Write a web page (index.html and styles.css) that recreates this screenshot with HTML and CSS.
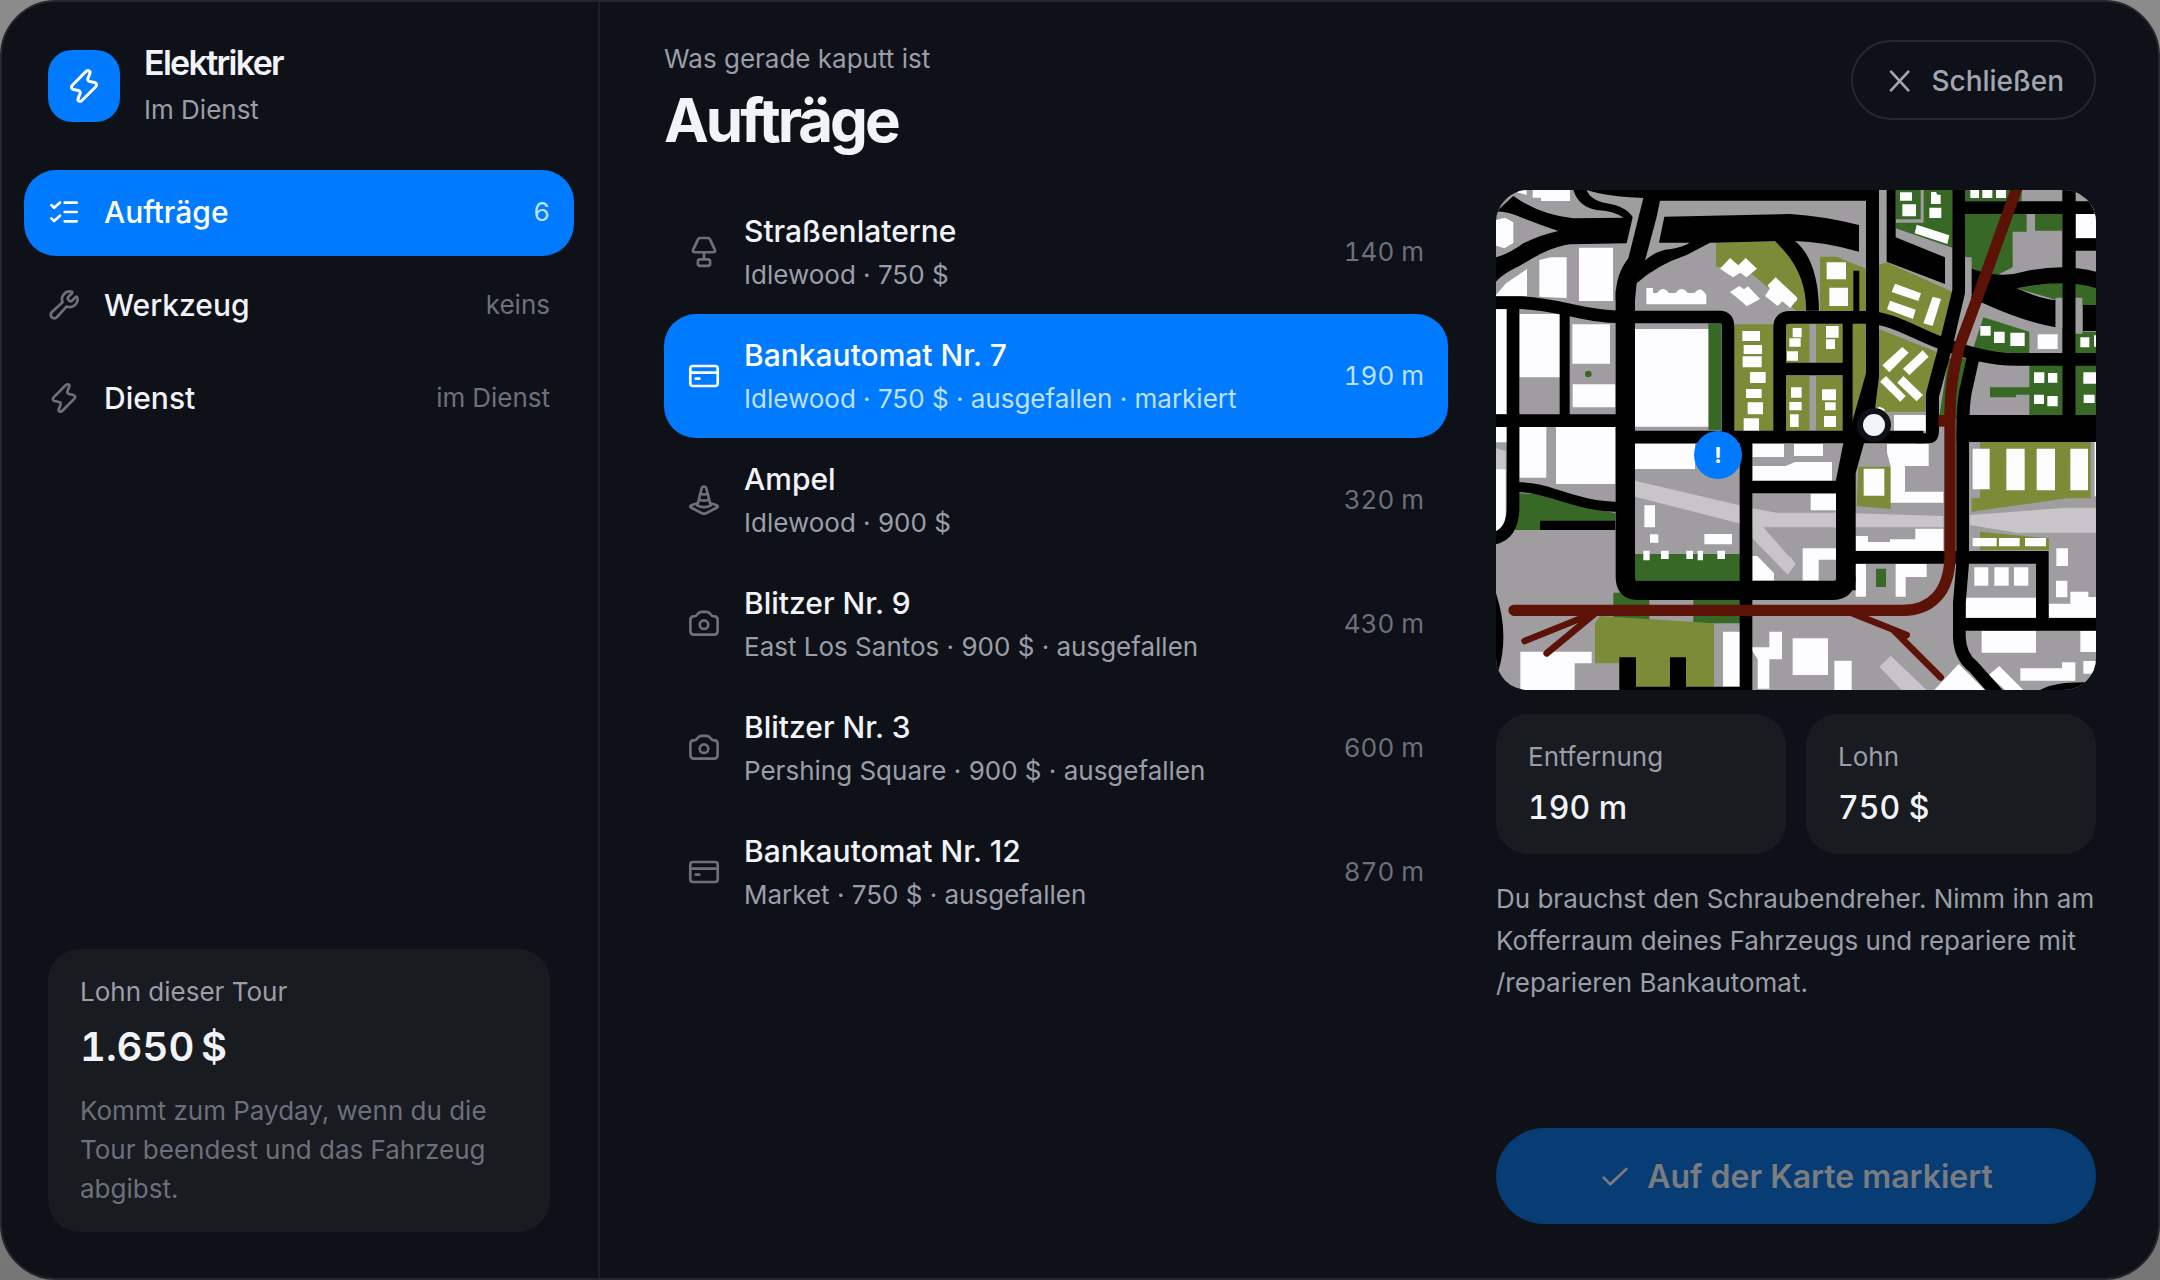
FILE: index.html
```html
<!DOCTYPE html>
<html lang="de">
<head>
<meta charset="utf-8">
<meta name="viewport" content="width=device-width, initial-scale=1">
<title>Elektriker – Aufträge</title>
<link rel="stylesheet" href="styles.css">
</head>
<body>
<svg class="symbols" aria-hidden="true">
  <symbol id="i-bolt" viewBox="0 0 24 24"><path d="M13.2 2.4 4.2 11.5C3.2 12.6 3.5 13.9 5 14.3L8.2 15C9.4 15.3 9.7 16 9.4 17L8 20.6C7.6 22 9.4 22.9 10.6 21.7L19.8 12.5C20.8 11.4 20.5 10.1 19 9.7L15.8 9C14.6 8.7 14.3 8 14.6 7L16 3.4C16.4 2 14.6 1.1 13.2 2.4Z"/></symbol>
  <symbol id="i-tasks" viewBox="0 0 24 24"><path d="M2.5 6.8 4.6 8.8 9 4.8M2.5 16.8 4.6 18.8 9 14.8M12.5 5H21.5M12.5 12H21.5M12.5 19H21.5"/></symbol>
  <symbol id="i-wrench" viewBox="0 0 24 24"><path d="M15 6.2a1.4 1.4 0 0 0 0 1.6l1.2 1.2a1.4 1.4 0 0 0 1.6 0l3-3c.5-.5 1.2-.3 1.3.4a6 6 0 0 1-8.1 6.7l-7.4 8.1a2.5 2.5 0 0 1-3.8-3.8l8.1-7.4A6 6 0 0 1 17.6 1.900c.7.1.9.8.4 1.300z"/></symbol>
  <symbol id="i-lamp" viewBox="0 0 24 24"><path d="M9.200 1.500h5.600c.9 0 1.500.4 1.800 1.200l3.500 7.500c.5 1.200 0 2-1.200 2H5.100c-1.200 0-1.700-.8-1.200-2L7.400 2.700c.3-.8.900-1.200 1.800-1.200zM12 12.200v5.300"/><rect x="7.400" y="17.500" width="9.200" height="4.900" rx="1.800"/></symbol>
  <symbol id="i-card" viewBox="0 0 24 24"><rect x="1.700" y="4.500" width="20.600" height="15" rx="2"/><path d="M1.700 9.500H22.300M5.800 14H8.500"/></symbol>
  <symbol id="i-cone" viewBox="0 0 24 24"><path d="M7 16 10.200 3.400c.5-2 3.100-2 3.600 0L17 16c-2.500 1.800-7.500 1.800-10 0zM9.300 7.200c1.600.8 3.800.8 5.400 0M8.200 11.500c2.200 1.200 5.400 1.200 7.600 0M7.300 14.200 2.600 15.900c-1.200.5-1.200 1.300 0 1.900l7.800 4.100c1.200.6 2 .6 3.200 0l7.800-4.100c1.200-.6 1.200-1.400 0-1.900L16.700 14.200"/></symbol>
  <symbol id="i-camera" viewBox="0 0 24 24"><path d="M1.800 9c0-2 .8-2.700 2.500-2.700 1.600 0 2.200-.5 2.900-1.700.7-1.200 1.300-1.700 2.800-1.700h4c1.500 0 2.100.5 2.800 1.700.7 1.200 1.300 1.700 2.900 1.700 1.700 0 2.500.7 2.500 2.700v8.400c0 1.900-.7 2.600-2.600 2.600H4.400c-1.900 0-2.600-.7-2.600-2.600z"/><circle cx="12" cy="12.500" r="3.200"/></symbol>
  <symbol id="i-close" viewBox="0 0 24 24"><path d="M6 5 19 19M19 5 6 19"/></symbol>
  <symbol id="i-check" viewBox="0 0 24 24"><path d="M3.500 12.500 8.500 17.500 20.500 6"/></symbol>
</svg>

<div class="panel">
  <aside class="sidebar">
    <div class="brand">
      <span class="brand-mark"><svg class="icon icon-brand"><use href="#i-bolt"/></svg></span>
      <div class="brand-text">
        <p class="brand-name">Elektriker</p>
        <p class="muted">Im Dienst</p>
      </div>
    </div>
    <nav class="nav">
      <button class="nav-item active" type="button"><svg class="icon"><use href="#i-tasks"/></svg><span class="label">Aufträge</span><span class="hint">6</span></button>
      <button class="nav-item" type="button"><svg class="icon"><use href="#i-wrench"/></svg><span class="label">Werkzeug</span><span class="hint">keins</span></button>
      <button class="nav-item" type="button"><svg class="icon"><use href="#i-bolt"/></svg><span class="label">Dienst</span><span class="hint">im Dienst</span></button>
    </nav>
    <section class="card wage">
      <p class="muted">Lohn dieser Tour</p>
      <p class="wage-amount">1.650&#8239;$</p>
      <p class="wage-note">Kommt zum Payday, wenn du die Tour beendest und das Fahrzeug abgibst.</p>
    </section>
  </aside>

  <main class="main">
    <header class="head">
      <div>
        <p class="muted">Was gerade kaputt ist</p>
        <h1>Aufträge</h1>
      </div>
      <button class="close" type="button"><svg class="icon"><use href="#i-close"/></svg>Schließen</button>
    </header>

    <div class="content">
      <div class="jobs">
        <button class="job" type="button"><svg class="icon"><use href="#i-lamp"/></svg><span class="job-text"><span class="label">Straßenlaterne</span><span class="muted">Idlewood · 750 $</span></span><span class="hint">140 m</span></button>
        <button class="job active" type="button"><svg class="icon"><use href="#i-card"/></svg><span class="job-text"><span class="label">Bankautomat Nr. 7</span><span class="muted">Idlewood · 750 $ · ausgefallen · markiert</span></span><span class="hint">190 m</span></button>
        <button class="job" type="button"><svg class="icon"><use href="#i-cone"/></svg><span class="job-text"><span class="label">Ampel</span><span class="muted">Idlewood · 900 $</span></span><span class="hint">320 m</span></button>
        <button class="job" type="button"><svg class="icon"><use href="#i-camera"/></svg><span class="job-text"><span class="label">Blitzer Nr. 9</span><span class="muted">East Los Santos · 900 $ · ausgefallen</span></span><span class="hint">430 m</span></button>
        <button class="job" type="button"><svg class="icon"><use href="#i-camera"/></svg><span class="job-text"><span class="label">Blitzer Nr. 3</span><span class="muted">Pershing Square · 900 $ · ausgefallen</span></span><span class="hint">600 m</span></button>
        <button class="job" type="button"><svg class="icon"><use href="#i-card"/></svg><span class="job-text"><span class="label">Bankautomat Nr. 12</span><span class="muted">Market · 750 $ · ausgefallen</span></span><span class="hint">870 m</span></button>
      </div>

      <section class="detail">
        <div class="map">
          <svg viewBox="18 30 1800 1500" preserveAspectRatio="xMidYMid slice" aria-hidden="true">
            <rect x="18" y="30" width="1800" height="1500" fill="#9f9d9f"/>
            <!-- parks -->
            <g fill="#376826">
              <rect x="655" y="430" width="38" height="320"/>
              <circle cx="295" cy="582" r="10"/>
              <path d="M1217 30h170v173l-170-58zM1425 30h170v34h-170zM1425 102h185v53h-42v107l-60 30-83-25zM1635 102h82v50h-82z"/>
              <path d="M1580 325 1717 305V365zM1757 305l61 20v52h-61zM1480 412l138 43v67l-170-12z"/>
              <path d="M1618 552h99v153h-99zM1757 552h61v153h-61zM1757 455h61v67h-61zM1375 535h60l-35 180h-53zM1500 622h118v22h-40v8h-78z"/>
              <path d="M85 940 140 942 376 1000v25H150v25H75zM435 1122h315v80H435zM370 1238h108v92H370zM610 1260h140v70H610zM1158 1166h30v55h-30z"/>
            </g>
            <g fill="#7b8b38">
              <path d="M678 186h180l80 70 10 136h-30l-80-65-48-42-50-30-62 7zM733 433h117v320H733zM888 432h170v116H888zM888 588h170v164H888z"/>
              <path d="M990 230h50l88 36v130H990zM1167 255l23-8 197 88-37 140-183-67zM1167 447l171 68-30 180h-153l12-100zM1088 432h40v150l-40 138z"/>
              <path d="M1105 860h97v127l-102-9zM1470 786h332v169h-72l-285 40v-40h25zM1470 1055l207 20v35h-207zM330 1308l-15 22v120h73v72h284v-192z"/>
            </g>
            <path fill="#9f9d9f" d="M958 432h20v320h-20zM1292 30h9v98h-84v-10h75z"/>
            <path fill="#c7c5c8" d="M435 902 787 985l73 13h180l320 10v34H820l97 110-24 32L787 1075v-35L435 950zM1440 1005l290-22h88v75h-238l-140-23zM18 805l29 8v55H18zM900 1128l14 20-14 22zM1168 1460l34-33 108 103h-75z"/>
            <!-- buildings -->
            <g fill="#fdfcfe">
              <path d="M70 30h40v15L85 38zM128 30h112v33h-87v-10h-25zM18 120l27-7 25 14v62l-27 16-25-8zM267 203h102v160H267zM148 240l35-8h47v122l-82-4zM18 345l30-35 63-43v81H18z"/>
              <path d="M469 324h20v15h12q18-24 36 0h20q18-24 36 0h20q18-24 36 6v28H469z"/>
              <path d="M18 388h33v315H18zM88 402h122v190H88zM247 433h113v118H247zM248 613h128v69H248zM435 447h220v293H435z"/>
              <path d="m690 266 30-32 25 22 22-22 34 32-32 26-18-14-22 14zM720 336l28-18 14 10 12-9 36 38-40 22-10-10zM825 348l14-22-6-10 24-24 66 62-22 30-24-20-14 14z"/>
              <path d="M757 453h53v30h-53zM761 495h55v27h-55zM758 529h57v33h-57zM780 576h47v33h-47zM768 627h47v27h-47zM773 667h46v36h-46zM761 715h46v38h-46z"/>
              <path d="M908 444h27v28h-27zM898 475h34v25h-34zM891 514h33v28h-33zM903 622h32v31h-32zM898 666h37v25h-37zM900 703h26v38h-26zM1008 438h38v35h-38zM1008 478h27v29h-27zM996 628h42v33h-42zM1005 667h32v24h-32zM1002 708h36v33h-36z"/>
              <path d="M1010 247h58v51h-58zM1018 323h56v55h-56zM900 337l22 22-22 22zM1230 37h36v25h-36zM1237 73h41v36h-41zM1323 36h15l4 8h10v28h-29zM1318 83h36v31h-36zM1280 134l98 32-6 26-98-32zM1441 30h26v24h-26zM1477 30h30v24h-30zM1518 30h30v24h-30z"/>
              <path d="m1215 311 78 29-8 23-80-27zM1200 362l77 27-8 28-78-29zM1328 350l25 7-25 81-28-8z"/>
              <path d="m1237 501 19 17-58 59-21-21zM1298 511l18 19-58 56-19-20zM1188 588l59 60-16 17-61-60zM1240 588l59 57-19 19-58-56zM1153 688l16-8 15 8v17h-31zM1212 705h95v48h-95z"/>
              <path d="M1471 438h31v29h-31zM1512 455h32v34h-32zM1561 458h43v40h-43zM1643 463h60v44h-60zM1771 472h27v30h-27zM1812 466h6v34h-6zM1632 577h31v32h-31zM1674 579h28v29h-28zM1632 644h30v28h-30zM1672 648h31v31h-31zM1780 577h38v34h-38zM1781 644h33v25h-33zM1757 74h61v100h-61zM1757 38l61 22V40z"/>
              <path d="M18 740h33v47H18zM88 741h81v152H88zM198 741h178v171H198zM18 868h29v170q-10 12-29 16zM435 792h180v75H435zM463 976h32v66h-32zM480 1063h25v25h-25zM643 1062h83v31h-83zM460 1112h19v29h-19zM513 1112h23v25h-23zM589 1112h20v25h-20zM623 1112h16v29h-16zM682 1112h23v25h-23z"/>
              <path d="M787 792h95v39h-95zM912 792h87v36h-87zM787 858h100l28-12h111v57H787zM787 1128h15l50 52v22h-65zM962 941h76v50h-76zM938 1105h100v34h-52v63h-48zM91 1415h214v35h-51v80H91zM699 1355h51v165h-51zM784 1402h54v-47h38v83h-38v88h-35v-88l-19-30zM908 1375h106v110H908zM1033 1442h52v88h-52z"/>
              <path d="M1121 866h62v81h-62zM1191 792h125v66h-71v77h115v33h-158v-110l-11-40zM1097 1068h37v18h66v-8h76v-32h84v66h-263zM1097 1152h31v98h-31zM1217 1152h93v39h-63v59h-30z"/>
              <path d="M1448 806h51v122h-51zM1549 806h55v125h-55zM1640 806h55v125h-55zM1741 806h53v125h-53zM1814 786h4v163h-4zM1448 1074h72v25h-72zM1527 1074h62v25h-62zM1605 1074h63v25h-63zM1699 1105h35v53h-35zM1698 1202h34v50h-34zM1677 1271h64v-36h54v16h23v62h-141zM1453 1162h42v55h-42zM1513 1162h43v55h-43zM1572 1162h43v55h-43zM1428 1253h210v60h-210z"/>
              <path d="M1475 1352h163v66h-163zM1771 1352h47v64h-47zM1780 1443h38v38h-38zM1591 1465h125v-18h40v55h-165zM1333 1530l73-78 78 78zM1496 1485l32-27 72 72h-55z"/>
            </g>
            <!-- streets -->
            <g fill="#000">
              <path d="M18 95 70 48Q150 105 250 115L400 113Q370 92 320 90 265 80 250 30H290Q300 60 350 70 410 80 428 112L410 190 240 193C160 205 110 250 60 272Q30 290 18 305V232Q60 220 100 190 150 165 205 153 150 135 100 115 50 92 18 95Z"/>
              <path d="M18 30h54L18 92z"/>
              <path d="M290 30H1128V62H510L500 110 463 250 440 310 435 360H377Q375 285 415 235L460 54Q350 50 290 30Z"/>
              <path d="M523 110 900 102Q1000 108 1107 135V215Q1000 185 915 183 985 240 987 392H948Q950 270 855 184L660 188 590 225Q500 255 440 310L463 243Q500 210 540 208 580 200 600 188H507Z"/>
              <path d="M1128 30V580L1088 720 1060 790 1038 900V1231H1097V880L1122 790 1155 690 1167 590V30ZM1387 30V330L1350 480 1308 640V760H1280V790H1315Q1347 790 1347 750V650L1390 490 1425 340V30ZM1190 30h27v142l148 60v80l-175-67z"/>
              <path d="M1425 64h432v38h-432zM1717 30h40v690h-40zM1757 175h61v37h-61zM1400 705h418v81h-418zM1778 375h40v78h-40zM1090 272h18v125h-18zM150 1022h226v28H150z"/>
              <path d="M1425 258Q1520 300 1600 275 1720 248 1818 275V325Q1730 295 1580 325 1660 360 1697 360V442Q1600 425 1480 370L1425 345Z"/>
              <path d="M388 1432h50v88h102v-88h48v88h162v10H388zM18 1240q40 120 8 230H18zM1650 1530q50-28 168-22v22z"/>
            </g>
            <path fill="#9f9d9f" d="M1425 232h20v115l-20 80zM1697 353h20v90h-20zM1757 353h20v108h-20z"/>
            <g fill="none" stroke="#000">
              <path stroke-width="58" d="M406 330V1190Q406 1231 440 1231H1030Q1068 1231 1068 1190"/>
              <path stroke-width="38" d="M18 368H90C200 370 280 411 400 411H690Q714 411 714 440V770M69 380V990Q65 1065 10 1075M869 770V440Q869 412 900 412H1130C1210 412 1290 470 1370 495 1440 520 1500 538 1580 538H1820M406 771H1300M869 567H1080M1450 530 1430 620Q1418 660 1418 780V1150L1408 1270V1370Q1410 1430 1450 1460L1530 1550M1090 1132H1657V1333M1410 1333H1820M768 770V1530M768 921H1060M18 722H400"/>
              <path stroke-width="30" d="M224 395V720M1073 412V770M69 922H95C180 922 250 981 400 981"/>
            </g>
            <!-- railway -->
            <rect x="1345" y="705" width="40" height="35" fill="#5c1206"/>
            <g fill="none" stroke="#5c1206" stroke-linecap="round">
              <path stroke-width="34" d="M1582 20 1458 365 1408 500Q1380 600 1380 700V1130C1378 1240 1320 1291 1240 1291H72"/>
              <path stroke-width="20" d="M290 1308 104 1383M315 1300 170 1420M1075 1295 1250 1365M1210 1350 1352 1492"/>
            </g>
          </svg>
          <span class="pin pin-job">!</span>
          <span class="pin pin-self"></span>
        </div>
        <div class="stats">
          <div class="card stat"><p class="muted">Entfernung</p><p class="stat-value">190 m</p></div>
          <div class="card stat"><p class="muted">Lohn</p><p class="stat-value">750 $</p></div>
        </div>
        <p class="advice">Du brauchst den Schraubendreher. Nimm ihn am Kofferraum deines Fahrzeugs und repariere mit /reparieren Bankautomat.</p>
        <button class="mark" type="button" disabled><svg class="icon"><use href="#i-check"/></svg>Auf der Karte markiert</button>
      </section>
    </div>
  </main>
</div>
</body>
</html>
```
FILE: styles.css
```css
:root {
  --heading-tracking: -0.05em;
  --figure-tracking: -0.02em;
}

* {
  box-sizing: border-box;
}

body {
  margin: 0;
  background: linear-gradient(#8b8b8b, #767676);
  color: #f2f3f8;
  font: 400 26px/40px Inter, "Liberation Sans", sans-serif;
  font-optical-sizing: none;
}

p,
h1 {
  margin: 0;
}

button {
  margin: 0;
  border: 0;
  background: none;
  color: inherit;
  font: inherit;
  text-align: left;
}

.symbols {
  display: none;
}

.icon {
  flex: none;
  width: 32px;
  height: 32px;
  fill: none;
  stroke: currentColor;
  stroke-width: 2;
  stroke-linecap: round;
  stroke-linejoin: round;
}

.panel {
  display: grid;
  grid-template-columns: 598px 1fr;
  min-height: 100vh;
  overflow: hidden;
  border: 2px solid #24272c;
  border-radius: 56px;
  background: #0e1218;
}

.muted {
  color: #9b9ea8;
}

.label {
  font-size: 30px;
  font-weight: 500;
  line-height: 44px;
}

.hint {
  margin-left: auto;
  color: #6d707b;
  font-variant-numeric: tabular-nums;
}

.card {
  border-radius: 32px;
  background: #181b20;
}

/* Sidebar */

.sidebar {
  display: flex;
  flex-direction: column;
  padding: 40px 24px 46px 22px;
  border-right: 2px solid #1c1f25;
}

.brand {
  display: flex;
  align-items: center;
  gap: 24px;
  padding: 0 24px;
}

.brand-mark {
  display: grid;
  place-items: center;
  width: 72px;
  height: 72px;
  border-radius: 24px;
  background: #007aff;
  color: #fff;
}

.icon-brand {
  width: 36px;
  height: 36px;
}

.brand-text {
  display: grid;
  gap: 6px;
}

.brand-name {
  font-size: 34px;
  font-weight: 600;
  letter-spacing: var(--heading-tracking);
  line-height: 42px;
}

.nav {
  display: grid;
  gap: 7px;
  margin-top: 40px;
}

.nav-item {
  display: flex;
  align-items: center;
  gap: 24px;
  height: 86px;
  padding: 0 24px 2px;
  border-radius: 32px;
}

.nav-item .icon,
.job .icon {
  color: #6d707b;
}

.active {
  background: #007aff;
  color: #fff;
}

.job.active .icon,
.nav-item.active .icon {
  color: #fff;
}

.active .hint,
.active .muted {
  color: #bfe0ff;
}

.wage {
  margin: auto 24px 0;
  padding: 24px 32px;
}

.wage .muted,
.stat .muted {
  line-height: 38px;
}

.wage-amount {
  margin: 8px 0 16px;
  font-size: 40px;
  font-weight: 600;
  letter-spacing: var(--figure-tracking);
  line-height: 56px;
  font-variant-numeric: tabular-nums;
}

.wage-note {
  color: #6d707b;
  line-height: 39px;
}

/* Main area */

.main {
  display: flex;
  flex-direction: column;
  padding: 38px 62px 54px 64px;
}

.head {
  display: flex;
  align-items: flex-start;
  justify-content: space-between;
}

.head .muted {
  line-height: 38px;
}

h1 {
  margin-top: 6px;
  font-size: 60px;
  font-weight: 700;
  letter-spacing: var(--heading-tracking);
  line-height: 72px;
}

.close {
  display: flex;
  align-items: center;
  gap: 16px;
  height: 80px;
  padding: 2px 30px 0;
  border: 2px solid #25282d;
  border-radius: 40px;
  color: #a3a6b0;
  font-size: 28px;
  font-weight: 500;
}

.content {
  display: grid;
  flex: 1;
  grid-template-columns: 1fr 600px;
  gap: 48px;
  margin-top: 34px;
}

.jobs {
  display: flex;
  flex-direction: column;
}

.job {
  display: flex;
  align-items: center;
  gap: 24px;
  min-height: 124px;
  padding: 0 24px;
  border-radius: 32px;
}

.job-text {
  display: grid;
  gap: 2px;
}

.detail {
  display: flex;
  flex-direction: column;
  gap: 24px;
}

.map {
  position: relative;
  aspect-ratio: 6 / 5;
  overflow: hidden;
  border-radius: 32px;
}

.map svg {
  display: block;
  width: 100%;
  height: 100%;
}

.pin {
  position: absolute;
  border-radius: 50%;
  transform: translate(-50%, -50%);
}

.pin-job {
  left: 37%;
  top: 53%;
  width: 48px;
  height: 48px;
  background: #007aff;
  color: #fff;
  font-size: 22px;
  font-weight: 700;
  line-height: 48px;
  text-align: center;
}

.pin-self {
  left: 63%;
  top: 47%;
  width: 34px;
  height: 34px;
  border: 6px solid #0e1218;
  background: #f2f3f8;
}

.stats {
  display: grid;
  grid-template-columns: 1fr 1fr;
  gap: 20px;
}

.stat {
  padding: 24px 32px 22px;
}

.stat-value {
  margin-top: 8px;
  font-size: 32px;
  font-weight: 500;
  line-height: 48px;
  font-variant-numeric: tabular-nums;
}

.advice {
  color: #9b9ea8;
  line-height: 42px;
}

.mark {
  display: flex;
  align-items: center;
  justify-content: center;
  gap: 16px;
  height: 96px;
  margin-top: auto;
  padding-top: 2px;
  border-radius: 48px;
  background: #083c74;
  color: #7a7c80;
  font-size: 32px;
  font-weight: 600;
}
```
